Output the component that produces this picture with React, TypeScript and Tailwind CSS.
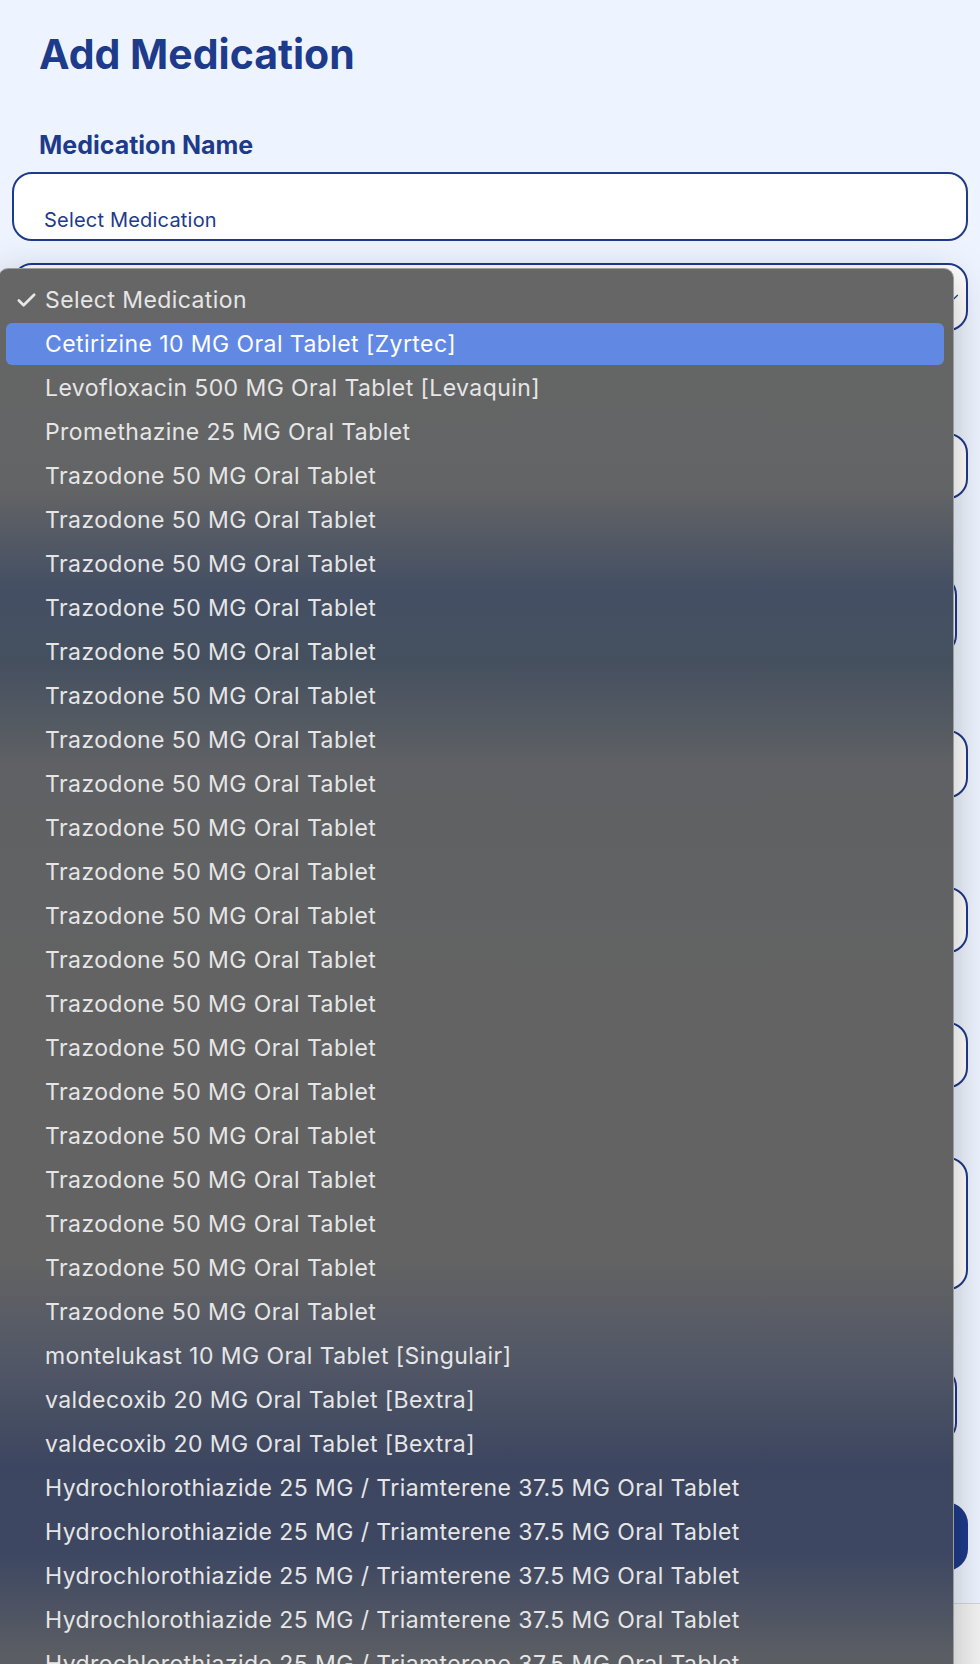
import { Check, ChevronDown } from 'lucide-react';

const OPTIONS: string[] = [
  'Select Medication',
  'Cetirizine 10 MG Oral Tablet [Zyrtec]',
  'Levofloxacin 500 MG Oral Tablet [Levaquin]',
  'Promethazine 25 MG Oral Tablet',
  ...Array(20).fill('Trazodone 50 MG Oral Tablet'),
  'montelukast 10 MG Oral Tablet [Singulair]',
  'valdecoxib 20 MG Oral Tablet [Bextra]',
  'valdecoxib 20 MG Oral Tablet [Bextra]',
  ...Array(6).fill('Hydrochlorothiazide 25 MG / Triamterene 37.5 MG Oral Tablet'),
];

function MenuRow({ text, checked, active }: { text: string; checked?: boolean; active?: boolean }) {
  return (
    <div className="h-[44px] py-px pl-[7px] pr-[9px]">
      <div className={`h-full flex items-center rounded-[6px] ${active ? 'bg-[#6189e4] text-white' : 'text-[#e6e6e6]'}`}>
        <div className="w-[39px] pl-[9px] flex items-center">
          {checked && <Check size={23} strokeWidth={2.8} className="text-[#e6e6e6]" />}
        </div>
        <span className="whitespace-nowrap">{text}</span>
      </div>
    </div>
  );
}

export default function App() {
  return (
    <div className="relative h-[1664px] overflow-hidden bg-[#eef4ff] font-['Inter','Noto_Sans',sans-serif]">
      <div className="h-[1603px] flex flex-col">
        <h1 className="pt-[30px] pl-[39px] text-[41px] leading-[48px] font-bold text-[#1e3a8a]">Add Medication</h1>

        <label className="mt-[51px] pl-[39px] text-[25px] leading-[32px] font-bold text-[#1e3a8a]">Medication Name</label>

        {/* medication search input */}
        <div className="mt-[11px] mx-[12px] h-[69px] border-2 border-[#1e3a8a] rounded-[20px] bg-white pl-[30px] pt-[32px]">
          <div className="text-[20px] leading-[28px] tracking-[0.2px] text-[#1e3a8a]">Select Medication</div>
        </div>

        {/* native select, opened below */}
        <div className="mt-[22px] mx-[12px] h-[68px] border-2 border-[#1e3a8a] rounded-[20px] bg-white flex items-center justify-end pr-[5px]">
          <ChevronDown size={14} strokeWidth={2} className="text-[#1e3a8a]" />
        </div>

        {/* rest of the form, hidden behind the popup */}
        <div className="mt-[102px] mx-[12px] h-[66px] border-2 border-[#1e3a8a] rounded-[20px] bg-white" />
        <div className="mt-[76px] ml-[12px] mr-[23px] h-[80px] border-2 border-[#1e3a8a] rounded-[20px] bg-white" />
        <div className="mt-[75px] mx-[12px] h-[68px] border-2 border-[#1e3a8a] rounded-[20px] bg-white" />
        <div className="mt-[89px] mx-[12px] h-[66px] border-2 border-[#1e3a8a] rounded-[20px] bg-white" />
        <div className="mt-[69px] mx-[12px] h-[66px] border-2 border-[#1e3a8a] rounded-[20px] bg-white" />
        <div className="mt-[69px] mx-[12px] h-[133px] border-2 border-[#1e3a8a] rounded-[20px] bg-white" />
        <div className="mt-[77px] ml-[12px] mr-[23px] h-[76px] border-2 border-[#1e3a8a] rounded-[20px] bg-white" />
        <div className="mt-[59px] mx-[12px] h-[69px] rounded-[22px] bg-[#1e3a8a]" />
      </div>

      <div className="h-[61px] bg-[#f3f3f3] border-t border-[#d6d6d6]" />

      {/* open select popup */}
      <div className="absolute left-[-2px] top-[268px] w-[956px] h-[1460px] rounded-[10px] border border-[#9c9c9c] shadow-[0_10px_40px_rgba(0,0,0,0.25)] bg-[linear-gradient(180deg,#666666_0%,#636465_15%,#444f64_22%,#45505f_27%,#5f6164_34%,#636363_50%,#636363_68%,#515766_75%,#3d4660_82%,#3d4762_88%,#5a5d63_95%,#606162_100%)] pt-[9px] text-[23px] tracking-[0.42px]">
        {OPTIONS.map((o, i) => (
          <MenuRow key={i} text={o} checked={i === 0} active={i === 1} />
        ))}
      </div>
    </div>
  );
}
